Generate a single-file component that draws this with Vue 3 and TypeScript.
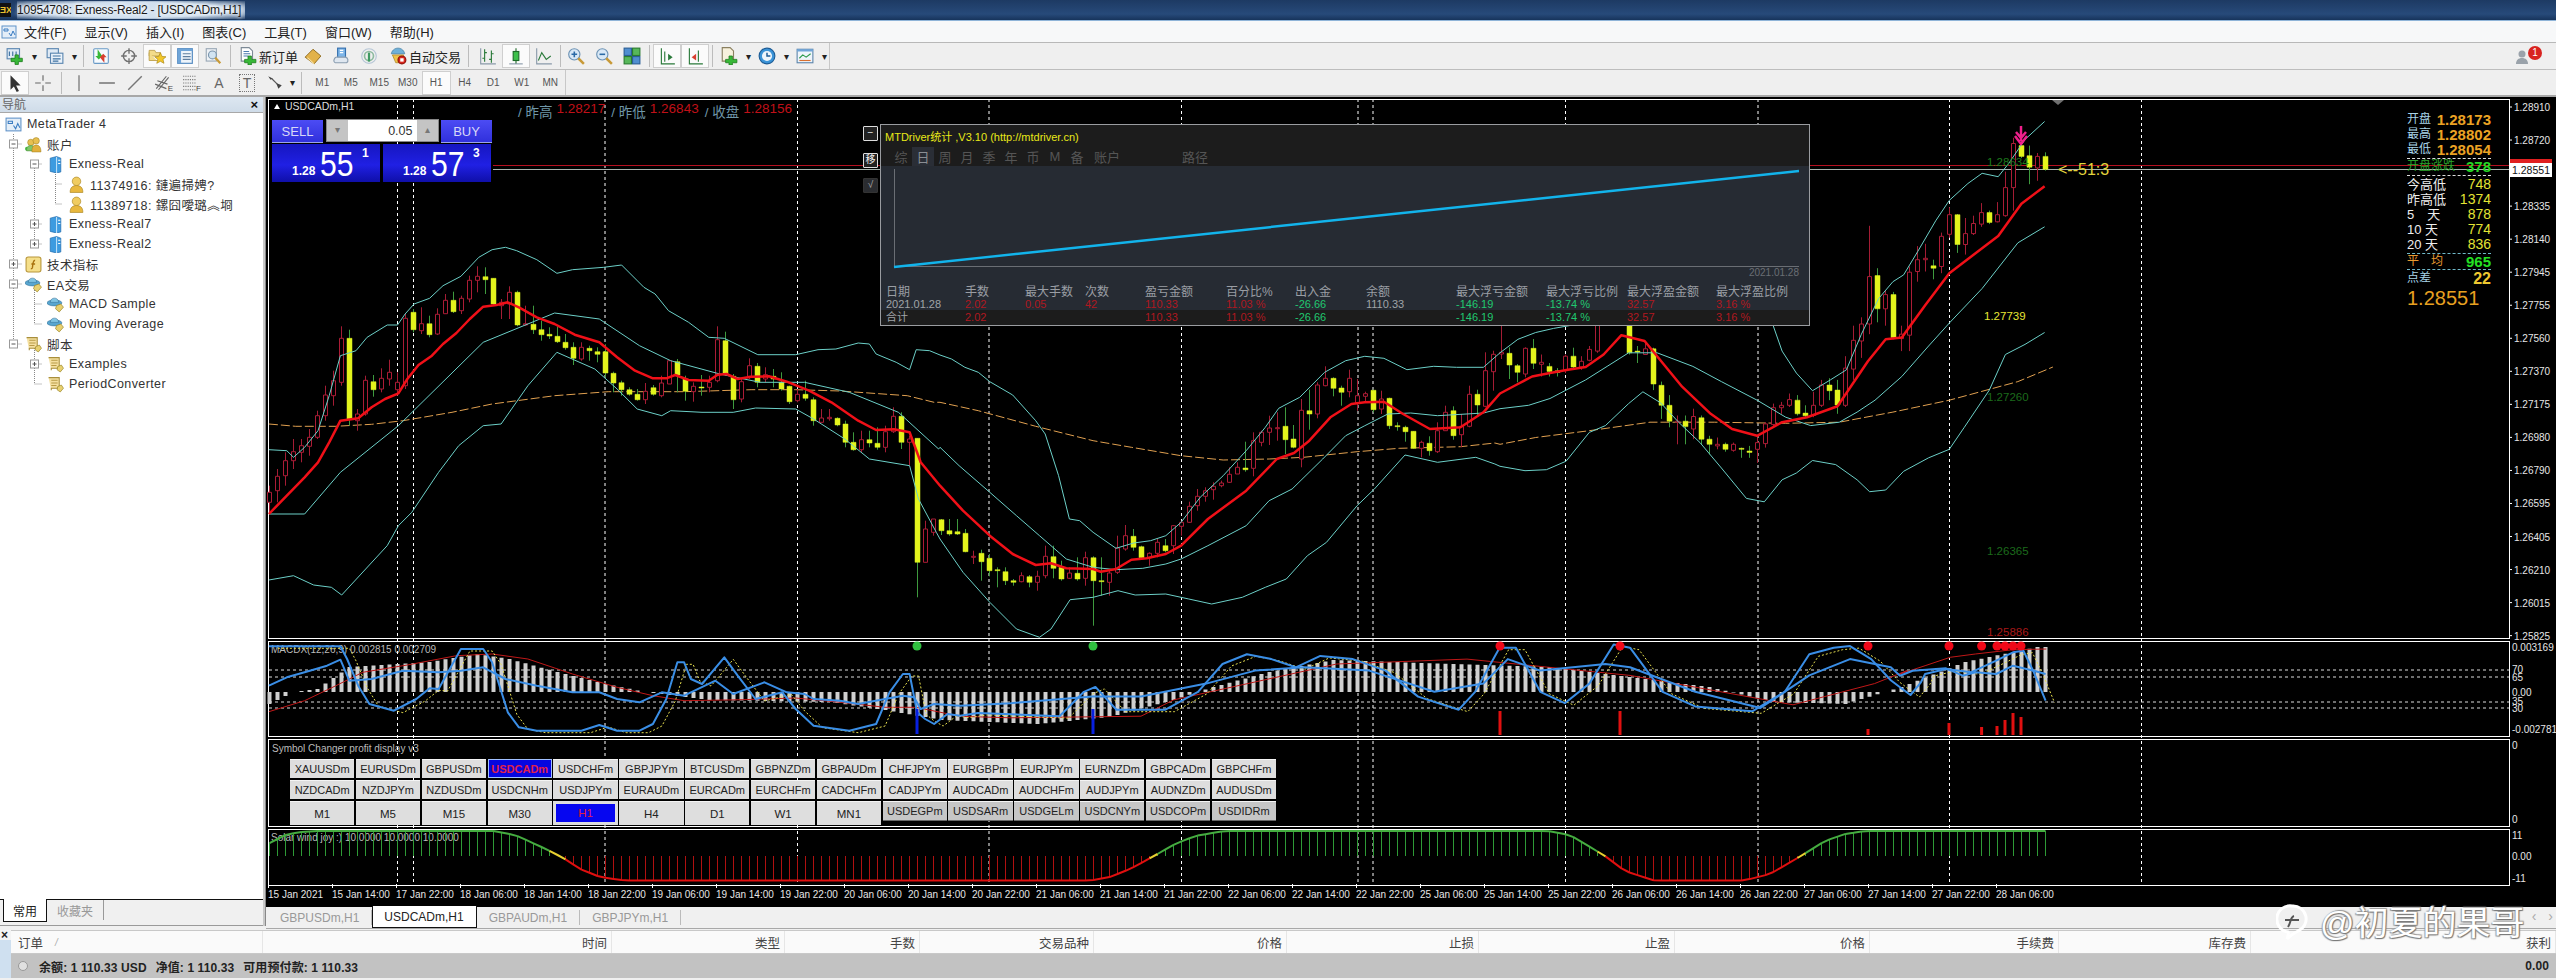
<script setup lang="ts">
type Fn = (x: number, y: number) => [number, number]
const z9: Fn = (x, y) => [260 + x / 2.24, 240 + y / 3]
const z11: Fn = (x, y) => [940 + x / 2.613, 320 + y / 3]
const z10: Fn = (x, y) => [1500 + x / 2.8, 110 + y / 2.953]
const z5: Fn = (x, y) => [260 + x / 2.24, 630 + y / 3]
const z7: Fn = (x, y) => [1900 + x / 2.39, 620 + y / 3]
const zd: Fn = (x, y) => [x * 1.63, y * 1.63]

function conv(fn: Fn, a: number[]): [number, number][] {
  const o: [number, number][] = []
  for (let i = 0; i < a.length; i += 2) o.push(fn(a[i], a[i + 1]))
  return o
}
const toPath = (p: [number, number][]) =>
  'M' + p.map(q => q[0].toFixed(1) + ' ' + q[1].toFixed(1)).join('L')

const bandA = toPath([
  ...conv(z9, [20,632,60,635,75,655,100,625,130,575,155,470,180,350,215,335,240,295,285,258,308,258,325,225,345,195,380,178,410,140,450,112,490,55,520,32,550,25,575,35,620,62,665,103,700,92,770,85,810,78,860,145,885,165,915,215,960,250,1005,295,1040,298,1115,347,1200,347,1250,332,1290,330,1340,312,1365,315,1380,345,1425,370,1455,392,1470,332,1500,335]),
  ...conv(z11, [0,108,30,120,65,145,100,160,130,188,190,228,250,305,275,345,310,470,338,600,365,605,400,640,460,688,506,672,550,665,590,650,630,610,680,535,740,470,800,395,850,325,885,268,940,235,1005,160,1060,125,1110,112,1160,118,1220,152,1290,142,1350,145,1420,145]),
  ...conv(z10, [0,720,50,680,100,660,150,648,300,620,700,600,765,640,790,715,830,780,875,832,925,800,970,770,1012,665,1060,560,1100,510,1130,490,1170,420,1220,330,1258,270,1310,220,1350,190,1395,200,1425,160,1470,90,1525,37]),
])
const bandB = toPath([
  ...conv(z9, [20,825,100,825,180,700,310,560,500,310,660,222,760,240,850,320,920,365,1030,405,1120,430,1220,430,1320,460,1430,520,1520,630]),
  ...conv(z11, [0,385,50,440,130,520,200,590,260,650,330,720,400,745,460,752,530,748,590,735,630,720,700,680,800,620,860,545,920,510,1000,420,1060,350,1110,320,1170,285,1230,282,1300,290,1420,282]),
  ...conv(z10, [0,885,80,875,140,855,185,830,240,800,300,760,360,720,440,720,540,760,620,805,720,860,800,910,870,935,950,925,1000,895,1050,860,1125,790,1200,700,1260,630,1350,530,1450,395,1525,348]),
])
const bandC = toPath([
  ...conv(z9, [20,1023,75,1010,120,1038,160,1045,183,1068,285,920,310,860,340,820,400,700,445,620,500,560,540,555,600,440,665,340,750,390,800,450,845,510,900,530,920,515,990,520,1060,520,1110,507,1200,510,1240,540,1310,600,1365,660,1455,680,1475,780,1515,880]),
  ...conv(z11, [0,660,60,760,130,850,200,930,260,955,290,930,340,842,400,835,465,815,510,828,590,825,650,840,710,855,790,835,850,805,905,780,960,710,1010,670,1090,560,1135,510,1215,408,1300,430,1400,415,1450,435]),
  ...conv(z10, [0,1055,70,1068,130,1065,185,1040,250,955,295,935,360,870,400,835,450,868,500,925,560,985,620,1060,690,1150,740,1160,790,1095,830,1075,875,1038,940,1050,1000,1095,1035,1130,1080,1125,1130,1070,1200,1030,1258,1005,1300,940,1370,830,1415,725,1470,695,1525,660]),
])
const maRed = toPath([
  ...conv(z9, [20,825,60,770,100,715,130,670,155,610,180,545,220,538,250,505,280,480,310,463,330,420,355,378,385,350,410,315,440,282,470,240,500,203,530,198,555,190,580,205,620,235,660,255,705,287,760,310,800,355,840,395,880,418,910,418,930,408,960,423,1005,425,1025,407,1045,405,1070,420,1100,413,1140,412,1180,428,1230,455,1280,490,1340,545,1380,573,1420,571,1455,580,1480,670,1520,735]),
  ...conv(z11, [0,500,60,575,130,650,190,705,250,738,290,733,330,748,400,750,420,758,460,750,500,722,540,718,590,705,630,680,700,600,800,515,880,420,925,402,965,365,1020,295,1075,255,1110,250,1160,248,1210,285,1280,330,1360,325,1420,280]),
  ...conv(z10, [0,840,50,812,90,790,140,780,190,770,240,762,290,725,340,668,405,685,510,820,590,900,650,945,720,965,790,925,860,910,945,878,1030,745,1080,680,1125,675,1190,580,1258,485,1395,375,1460,280,1525,228]),
])
const maOrange = toPath([
  ...conv(z9, [20,555,80,562,170,562,250,556,320,545,430,520,520,495,660,470,780,458,950,458,1100,452,1200,452,1300,456,1450,470,1510,490]),
  ...conv(z11, [0,250,100,275,250,322,400,365,500,385,630,410,740,423,860,420,950,415,1090,398,1200,388,1360,383,1450,372]),
  ...conv(z10, [0,990,100,970,250,950,420,925,600,925,800,928,950,925,1100,895,1258,860,1450,805,1548,762]),
])

/* type (0 hollow red, 1 yellow), body top, body bottom, wick top, wick bottom */
const barsA = [0,760,790,740,820,0,712,755,690,790,0,665,710,640,740,0,638,665,600,690,0,620,640,600,670,0,595,622,570,650,0,530,595,515,600,0,468,530,440,545,0,425,470,395,500,0,298,430,262,440,1,298,540,272,560,0,525,545,510,575,0,424,525,410,530,1,428,452,408,473,0,418,450,388,460,0,400,420,362,440,0,430,452,400,470,0,238,440,225,450,1,220,272,210,280,0,254,275,205,285,1,254,287,230,295,0,226,285,208,288,0,184,224,165,225,1,184,218,158,222,0,178,215,170,225,0,124,180,110,190,0,112,124,82,160,1,113,122,85,165,1,118,195,118,200,0,190,200,180,240,0,160,195,142,240,1,160,258,155,262,0,254,258,200,260,1,256,272,200,285,1,272,287,245,305,1,286,291,265,300,1,292,308,263,312,1,310,326,285,332,1,325,358,310,378,0,325,360,310,365,1,328,335,320,365,1,338,346,325,370,1,338,402,316,415,1,403,432,398,460,1,431,452,425,470,1,452,466,445,470,1,466,482,450,485,0,457,482,432,495,1,446,466,438,470,0,432,470,410,475,0,365,435,365,435,1,368,408,360,460,1,420,457,410,485,0,442,458,430,488,1,444,446,408,470,0,430,445,410,460,0,302,425,262,430,1,305,405,278,410,1,412,482,405,510,0,428,480,420,490,0,380,412,358,420,1,382,430,372,445,0,407,420,385,430,1,412,420,390,445,1,430,450,400,455,1,442,488,440,495,0,466,485,450,490,1,466,478,425,485,1,482,545,475,560,0,537,550,510,550,0,535,539,510,545,1,538,558,535,562,1,555,610,545,625,1,610,632,580,635,0,602,632,575,640,1,602,612,575,625,1,613,625,565,632,0,578,625,560,640,0,532,578,505,582,1,532,610,520,630,0,600,610,590,680,1,598,970,598,1075,0,870,970,845,970,0,840,880,840,890]
const barsB = [1,602,635,600,648,1,635,645,600,650,1,638,645,600,648,1,643,698,630,700,0,712,715,695,735,1,703,728,692,785,1,718,755,705,772,1,752,754,745,805,1,758,785,745,798,1,785,790,780,800,0,770,788,760,790,1,773,790,768,805,0,772,790,755,815,0,712,770,680,778,1,713,748,680,778,1,745,780,725,785,0,762,778,745,780,1,763,780,715,785,0,716,778,698,800,1,716,785,712,920,1,785,788,715,830,0,762,790,750,830,0,687,760,650,765,0,650,690,618,695,1,652,685,630,695,1,683,716,680,720,0,703,716,700,740,0,670,703,660,715,1,680,695,660,700,0,620,680,618,705,0,610,622,605,650,0,562,610,548,612,0,532,560,510,575,0,515,532,505,548,0,502,512,490,542,0,492,500,485,505,0,466,490,445,492,0,445,465,430,465,1,447,452,368,458,0,365,448,340,472,0,340,370,335,382,0,327,340,290,378,0,326,328,280,365,1,322,362,265,405,1,360,385,318,388,0,274,420,240,445,1,275,285,212,332,0,198,285,190,298,0,178,200,142,202,1,178,208,175,232,1,207,220,200,260,0,178,218,152,235,0,230,252,180,275,0,224,232,218,248,1,214,272,212,280,0,240,270,215,285,1,238,320,236,330,1,320,322,310,335,1,325,338,320,368,1,337,388,336,390,0,370,388,365,415,1,373,395,352,410,0,335,398,310,402,0,280,335,260,335,1,275,350,262,362,0,322,347,285,385,0,226,322,200,325,1,226,258,212,290,0,155,262,100,265,0,106,158,95,215,0,100,105,20,120,1,103,138,85,180,1,140,160,135,190,0,88,165,85,175,1,88,133,60,150]
const barsC = [0,748,754,725,790,1,760,775,750,790,1,773,778,765,790,0,730,772,725,780,1,730,762,705,770,0,745,762,730,770,0,710,742,700,745,0,600,715,590,720,1,620,630,610,640,1,620,630,610,640,1,620,630,610,640,1,640,720,600,725,1,715,718,700,750,0,708,725,690,725,1,708,812,705,830,1,816,875,805,915,1,875,922,845,940,0,922,923,905,990,1,922,938,905,990,0,908,945,885,975,1,912,975,905,990,1,975,990,965,1020,0,990,995,970,1005,1,990,1005,985,1012,0,990,1008,985,1012,1,1002,1005,1000,1030,1,1010,1014,995,1030,0,985,1005,970,1045,0,930,988,925,1000,0,882,932,870,940,0,875,882,865,900,0,858,875,840,880,1,860,900,845,905,1,898,906,875,912,0,875,905,835,910,0,815,875,800,880,1,815,832,795,860,1,830,874,800,900,0,765,875,730,880,0,683,768,640,800,0,635,685,615,735,0,495,635,345,665,1,492,590,470,630,0,548,590,535,640,1,548,675,540,680,0,665,678,640,715,0,482,668,465,715,0,445,480,405,510,0,441,445,398,480,1,463,470,445,503,0,376,465,365,485,0,312,370,290,380,1,312,400,310,425,0,368,400,322,430,0,338,368,315,372,0,306,340,278,348,1,306,335,300,340,0,312,333,275,335,0,232,315,185,318,0,102,232,85,300,1,108,140,50,145,1,138,172,108,222,0,140,174,130,212,1,140,178,128,182]

let redW = '', redB = '', yelW = '', yelB = ''
function addBars(list: number[], start: number, fy: (v: number) => number) {
  for (let k = 0; k * 5 < list.length; k++) {
    const i = start + k
    const x = Math.round(269.3 + 8 * i) + 0.5
    const t = list[k * 5]
    const a = fy(list[k * 5 + 1]), b = Math.max(fy(list[k * 5 + 2]), fy(list[k * 5 + 1]) + 1)
    const u = fy(list[k * 5 + 3]), d = fy(list[k * 5 + 4])
    const w = `M${x} ${u.toFixed(1)}V${d.toFixed(1)}`
    if (t === 0) {
      redW += w
      redB += `M${x - 2} ${a.toFixed(1)}h4V${b.toFixed(1)}h-4z`
    } else {
      yelW += w
      yelB += `M${x - 2.5} ${a.toFixed(1)}h5V${b.toFixed(1)}h-5z`
    }
  }
}
addBars(barsA, 0, v => 240 + v / 3)
addBars(barsB, 84, v => 320 + v / 3)
addBars(barsC, 159, v => 110 + v / 2.953)

function lerp(k: number[], x: number): number {
  for (let i = 0; i + 3 < k.length; i += 2) {
    if (x <= k[i + 2]) {
      const t = (x - k[i]) / (k[i + 2] - k[i] || 1)
      return k[i + 1] + (k[i + 3] - k[i + 1]) * Math.max(0, t)
    }
  }
  return k[k.length - 1]
}
const barX = Array.from({ length: 223 }, (_, i) => Math.round(269.3 + 8 * i) + 0.5)

const histK = [0,-12,3,0,6,3,10,25,20,30,26,38,30,33,36,20,42,8,47,0,55,-8,70,-10,77,-18,84,-28,96,-32,105,-25,113,-8,118,5,125,20,133,32,148,28,160,25,170,15,180,5,188,-10,197,-12,204,5,212,30,221,45,222,45]
const histPath = barX.map((x, i) => `M${x} 693V${(693 - lerp(histK, i)).toFixed(1)}`).join('')

const fastPts: [number, number][] = [
  ...conv(z5, [20,52,180,52,195,90,220,170,245,225,300,245,350,210,380,178,400,180,450,60,500,60,520,100,555,250,580,295,620,305,720,305,760,288,800,305,850,305,880,285,910,210,935,100,950,100,965,150,990,165,1040,85,1070,140,1110,210,1170,190,1200,240,1240,290,1320,305,1380,285,1410,190,1440,135,1455,135,1472,250,1490,270,1510,285,1540,255,1568,260]),
  ...conv(zd, [600,438,650,440,665,425,672,422,685,436,715,436,735,425,750,408,765,402,780,405,795,410,810,403,830,405,850,412,870,428,895,436,905,425,920,398,930,398,945,425,960,432,975,420,990,396,1000,398,1020,425,1040,434,1075,437,1095,425,1110,402,1125,398,1135,397,1148,405,1160,418]),
  ...conv(z7, [0,205,25,228,50,190,60,165,110,150,170,160,230,125,270,100,295,95,320,160,348,245]),
]
const fastPath = toPath(fastPts)
const fastLag = toPath(fastPts.map(p => [p[0] + 9, p[1] + 2] as [number, number]))
const slowPath = toPath([
  ...conv(z5, [20,170,60,145,100,130,150,110,180,92,200,155,250,150,320,125,400,130,450,125,500,115,550,150,620,170,700,190,760,190,800,210,850,220,900,190,950,200,1020,155,1060,195,1130,160,1180,190,1220,195,1240,210,1300,215,1340,225,1400,210,1440,200,1465,205,1480,240,1510,225,1568,230]),
  ...conv(zd, [620,432,670,428,700,428,740,420,770,412,800,410,840,412,880,425,910,420,925,405,945,412,985,408,1000,410,1040,425,1080,435,1110,415,1135,405,1160,410]),
  ...conv(z7, [0,170,30,155,110,148,150,170,180,160,230,165,270,140,320,155,348,165]),
])
const redThin = toPath([
  ...conv(z5, [20,248,100,215,170,170,230,130,330,108,440,80,520,75,600,90,700,135,800,175,880,200,950,215,1080,212,1200,207,1300,220,1400,235,1470,235,1568,262]),
  ...conv(zd, [620,441,700,440,720,430,820,408,900,405,1000,415,1100,433,1150,420,1170,412]),
  ...conv(z7, [0,165,60,140,120,115,180,105,270,92,350,90]),
])
const redDots = [1500, 1620, 1868, 1949, 1981.6, 1997, 2005, 2013, 2021]
const redTicks = [[1500, 712], [1620, 712], [1868, 730], [1949, 724], [1981.6, 728], [1997, 727], [2005, 721], [2013, 714], [2021, 718]]
const redTickPath = redTicks.map(t => `M${t[0]} ${t[1]}V736`).join('')

const solarK = [268,845,285,836,300,833,320,832,494,832,515,836,535,845,550,852,565,860,580,870,600,878,625,881.5,1090,881.5,1110,878,1130,870,1154,857,1175,845,1195,837,1224,832,1548,832,1570,836,1590,848,1605,857,1625,872,1654,881.5,1744,881.5,1770,875,1801,857,1825,842,1845,835,1866,832,2046,832]
let solarG = '', solarR = '', solarGL = '', solarRL = '', solarY = ''
barX.forEach((x, i) => {
  const y = lerp(solarK, x)
  if (y <= 857) solarG += `M${x} 857V${y.toFixed(1)}`
  else solarR += `M${x} 857V${y.toFixed(1)}`
  if (i > 0) {
    const px = barX[i - 1], py = lerp(solarK, px)
    const seg = `M${px} ${py.toFixed(1)}L${x} ${y.toFixed(1)}`
    if (Math.abs(y - 857) < 6 && Math.abs(py - 857) < 6) solarY += seg
    else if (y <= 857) solarGL += seg
    else solarRL += seg
  }
})

const dashX = [397.5, 413.5, 605, 797.5, 989, 1181.5, 1358, 1373, 1565.5, 1758, 1949.5, 2141.5]
const dashPath = dashX.map(x => `M${x} 100V885`).join('')
const levelPath = [671, 678, 703, 709].map(y => `M269 ${y}H2509`).join('')

const prices = ['1.28910','1.28720','1.28525','1.28335','1.28140','1.27945','1.27755','1.27560','1.27370','1.27175','1.26980','1.26790','1.26595','1.26405','1.26210','1.26015','1.25825']
const priceTicks = prices.map((p, i) => ({ p, y: 108 + 33.04 * i }))
const subAxis = [
  { t: '0.003169', y: 648 }, { t: '70', y: 670 }, { t: '65', y: 678 }, { t: '0.00', y: 693 }, { t: '35', y: 702 }, { t: '30', y: 709 },
  { t: '-0.002781', y: 730 }, { t: '0', y: 746 }, { t: '0', y: 820 }, { t: '11', y: 836 }, { t: '0.00', y: 857 }, { t: '-11', y: 879 },
]
const times = ['15 Jan 2021','15 Jan 14:00','17 Jan 22:00','18 Jan 06:00','18 Jan 14:00','18 Jan 22:00','19 Jan 06:00','19 Jan 14:00','19 Jan 22:00','20 Jan 06:00','20 Jan 14:00','20 Jan 22:00','21 Jan 06:00','21 Jan 14:00','21 Jan 22:00','22 Jan 06:00','22 Jan 14:00','22 Jan 22:00','25 Jan 06:00','25 Jan 14:00','25 Jan 22:00','26 Jan 06:00','26 Jan 14:00','26 Jan 22:00','27 Jan 06:00','27 Jan 14:00','27 Jan 22:00','28 Jan 06:00']
const timeTicks = times.map((t, i) => ({ t, x: 268 + 64 * i }))
const timeTickPath = timeTicks.map(t => `M${t.x + 0.5} 885V889`).join('')
const floats = [
  { t: '1.28634', x: 1987, y: 167, c: '#1c7a1c' }, { t: '1.27739', x: 1984, y: 321, c: '#e6e634' },
  { t: '1.27260', x: 1987, y: 402, c: '#1c6a1c' }, { t: '1.26365', x: 1987, y: 556, c: '#1c6a1c' }, { t: '1.25886', x: 1987, y: 637, c: '#a81818' },
]

const menus = ['文件(F)', '显示(V)', '插入(I)', '图表(C)', '工具(T)', '窗口(W)', '帮助(H)']

type Tool = { k: 'b' | 'a' | 's' | 't'; i?: string; x?: string; p?: boolean; w?: number }
const tb1: Tool[] = [
  { k: 'b', i: 'plus' }, { k: 'a' }, { k: 's', w: 2 }, { k: 'b', i: 'profile' }, { k: 'a' }, { k: 's', w: 8 },
  { k: 'b', i: 'market' }, { k: 'b', i: 'cross' }, { k: 'b', i: 'star', p: true }, { k: 'b', i: 'list', p: true }, { k: 'b', i: 'glass' }, { k: 's', w: 6 },
  { k: 't', i: 'order', x: '新订单', w: 66 }, { k: 'b', i: 'gold' }, { k: 'b', i: 'cloud' }, { k: 'b', i: 'signal' },
  { k: 't', i: 'auto', x: '自动交易', w: 80 }, { k: 's', w: 11 }, { k: 'b', i: 'bar' }, { k: 'b', i: 'candle', p: true }, { k: 'b', i: 'line' }, { k: 's', w: 4 },
  { k: 'b', i: 'zin' }, { k: 'b', i: 'zout' }, { k: 'b', i: 'tile' }, { k: 's', w: 7 }, { k: 'b', i: 'shift', p: true }, { k: 'b', i: 'scroll', p: true }, { k: 's', w: 6 },
  { k: 'b', i: 'ind' }, { k: 'a' }, { k: 'b', i: 'clock' }, { k: 'a' }, { k: 'b', i: 'tmpl' }, { k: 'a' },
]
const tb2: Tool[] = [
  { k: 'b', i: 'cursor', p: true }, { k: 'b', i: 'hair' }, { k: 's', w: 8 }, { k: 'b', i: 'vl' }, { k: 'b', i: 'hl' }, { k: 'b', i: 'tl' },
  { k: 'b', i: 'fibe' }, { k: 'b', i: 'fibf' }, { k: 'b', i: 'lettera' }, { k: 'b', i: 'lettert' }, { k: 'b', i: 'arrows' }, { k: 'a' }, { k: 's', w: 13 },
]
const periods = ['M1', 'M5', 'M15', 'M30', 'H1', 'H4', 'D1', 'W1', 'MN']

const tree = [
  { t: 'MetaTrader 4', i: 'mt', l: 0 }, { t: '账户', i: 'accounts', l: 1 }, { t: 'Exness-Real', i: 'srv', l: 2 },
  { t: '11374916: 鏈遍掃娉?', i: 'user', l: 3 }, { t: '11389718: 鏍囧噯璐︽埛', i: 'user', l: 3 },
  { t: 'Exness-Real7', i: 'srv', l: 2 }, { t: 'Exness-Real2', i: 'srv', l: 2 }, { t: '技术指标', i: 'f', l: 1 },
  { t: 'EA交易', i: 'hat', l: 1 }, { t: 'MACD Sample', i: 'hat', l: 2 }, { t: 'Moving Average', i: 'hat', l: 2 },
  { t: '脚本', i: 'roll', l: 1 }, { t: 'Examples', i: 'roll', l: 2 }, { t: 'PeriodConverter', i: 'roll', l: 2 },
]
const guides = 'M13.5 20V230M13.5 30H22M13.5 150H22M13.5 170H22M13.5 230H22M34.5 50V130M34.5 50H42M34.5 110H42M34.5 130H42M55.5 50V90M55.5 70H62M55.5 90H62M34.5 170V210M34.5 190H42M34.5 210H42M34.5 230V270M34.5 250H42M34.5 270H42'
const boxes = [
  { x: 13.5, y: 30, o: false }, { x: 34.5, y: 50, o: false }, { x: 34.5, y: 110, o: true }, { x: 34.5, y: 130, o: true },
  { x: 13.5, y: 150, o: true }, { x: 13.5, y: 170, o: false }, { x: 13.5, y: 230, o: false }, { x: 34.5, y: 250, o: true },
]

const rowA = ['XAUUSDm','EURUSDm','GBPUSDm','USDCADm','USDCHFm','GBPJPYm','BTCUSDm','GBPNZDm','GBPAUDm','CHFJPYm','EURGBPm','EURJPYm','EURNZDm','GBPCADm','GBPCHFm']
const rowB = ['NZDCADm','NZDJPYm','NZDUSDm','USDCNHm','USDJPYm','EURAUDm','EURCADm','EURCHFm','CADCHFm','CADJPYm','AUDCADm','AUDCHFm','AUDJPYm','AUDNZDm','AUDUSDm']
const rowC = ['M1','M5','M15','M30','H1','H4','D1','W1','MN1']
const rowD = ['USDEGPm','USDSARm','USDGELm','USDCNYm','USDCOPm','USDIDRm']

const statRows = [
  { l: '开盘', v: '1.28173', c: 'top' }, { l: '最高', v: '1.28802', c: 'top' }, { l: '最低', v: '1.28054', c: 'top' },
  { l: '开盘涨跌', v: '378', c: 'open' }, { l: '今高低', v: '748', c: 'day' }, { l: '昨高低', v: '1374', c: 'day' },
  { l: '5　天', v: '878', c: 'day' }, { l: '10 天', v: '774', c: 'day' }, { l: '20 天', v: '836', c: 'day' },
  { l: '平　均', v: '965', c: 'avg' }, { l: '点差', v: '22', c: 'spread' },
]

const statHead = ['日期','手数','最大手数','次数','盈亏金额','百分比%','出入金','余额','最大浮亏金额','最大浮亏比例','最大浮盈金额','最大浮盈比例']
const statA = [['2021.01.28','g'],['2.02','r'],['0.05','r'],['42','r'],['110.33','r'],['11.03 %','r'],['-26.66','n'],['1110.33','g'],['-146.19','n'],['-13.74 %','n'],['32.57','r'],['3.16 %','r']]
const statB = [['合计','g'],['2.02','r'],['','r'],['','r'],['110.33','r'],['11.03 %','r'],['-26.66','n'],['','g'],['-146.19','n'],['-13.74 %','n'],['32.57','r'],['3.16 %','r']]
const tabs = ['综', '日', '周', '月', '季', '年', '币', 'M', '备', '账户']

const chartTabs = ['GBPUSDm,H1', 'USDCADm,H1', 'GBPAUDm,H1', 'GBPJPYm,H1']
const termCols = ['时间', '类型', '手数', '交易品种', '价格', '止损', '止盈', '价格', '手续费', '库存费', '获利']
</script>

<template>
  <div class="app">
    <svg class="defs" aria-hidden="true">
      <symbol id="i-mt" viewBox="0 0 16 16"><rect x="1" y="2" width="14" height="12" fill="#e4eef8" stroke="#5f92c8"/><path d="M3 5h4v2H3zM8 9l2 3 2-5 2 4" fill="none" stroke="#3a7cc2"/></symbol>
      <symbol id="i-plus" viewBox="0 0 16 16"><rect x="1" y="1.5" width="11" height="9" fill="#dfeaf5" stroke="#5b86b0"/><path d="M3 4v4M6 4v4M9 4v4" stroke="#3c70a0"/><path d="M8 7h3v3h3.5v3H11v2.5H8V13H4.5v-3H8z" fill="#38b838" stroke="#1c7c1c" stroke-width=".7"/></symbol>
      <symbol id="i-profile" viewBox="0 0 16 16"><rect x="1" y="1.5" width="10" height="8" fill="#dfeaf5" stroke="#5b86b0"/><rect x="4" y="5.5" width="11" height="9" fill="#eaf2fa" stroke="#5b86b0"/><path d="M6 8h7M6 10.5h7M6 12.500h5" stroke="#3c70a0"/></symbol>
      <symbol id="i-market" viewBox="0 0 16 16"><rect x="1.500" y="1.500" width="13" height="13" rx="1" fill="#f6fafe" stroke="#6a9ac6"/><path d="M5 3v6H3l3 3 3-3" fill="#38b838" transform="translate(0 -1)"/><path d="M11 13V8h2l-3-3-3 3" fill="#d84030" transform="translate(0 1) scale(1)"/></symbol>
      <symbol id="i-cross" viewBox="0 0 16 16"><circle cx="8" cy="8" r="5" fill="none" stroke="#707070" stroke-width="1.300"/><path d="M8 1v5M8 10v5M1 8h5M10 8h5" stroke="#707070" stroke-width="1.200"/></symbol>
      <symbol id="i-star" viewBox="0 0 16 16"><path d="M1 3h5l1 2h4v3H1z" fill="#f3dc8a" stroke="#b6963c" stroke-width=".7"/><path d="M1 5v7h7" fill="#f3dc8a" stroke="#b6963c" stroke-width=".7"/><path d="M11 5l1.500 3.400 3.500.3-2.700 2.300.9 3.500L11 12.700 7.800 14.500l.9-3.500L6 8.700l3.500-.3z" fill="#f2c72a" stroke="#a88412" stroke-width=".6"/></symbol>
      <symbol id="i-list" viewBox="0 0 16 16"><rect x="1.500" y="1.500" width="13" height="13" fill="#eef5fb" stroke="#4f86be"/><path d="M1.500 1.500h13v2h-13zM1.500 3.500h3v11h-3z" fill="#6fa5d8"/><path d="M6 6h7M6 8.500h7M6 11h7" stroke="#5f7f9f"/></symbol>
      <symbol id="i-glass" viewBox="0 0 16 16"><rect x="2" y="1.500" width="9" height="11" fill="#eef2f6" stroke="#9aa8b6"/><circle cx="7.500" cy="7" r="3.500" fill="#d2e4f2" stroke="#7a94ac"/><path d="M10 9.500l4.500 5" stroke="#c89a38" stroke-width="2"/></symbol>
      <symbol id="i-order" viewBox="0 0 16 16"><path d="M2 .5h7l3 3v9H2z" fill="#fff" stroke="#7d8a96"/><path d="M4 4h5M4 6h6M4 8h4" stroke="#4d7cb0"/><path d="M8 8h3v3h4v3h-4v2H8v-2H5v-3h3z" fill="#38b838" stroke="#1c7c1c" stroke-width=".7"/></symbol>
      <symbol id="i-gold" viewBox="0 0 16 16"><path d="M1 9l7-7 7 6-6 7z" fill="#e2b24a" stroke="#8a6518" stroke-width=".8"/><path d="M3 9.500l6 5.500" stroke="#f8e0a0"/></symbol>
      <symbol id="i-cloud" viewBox="0 0 16 16"><rect x="5" y="1" width="7" height="9" fill="#7db5e8" stroke="#336fae"/><path d="M7 3h3M7 5h3" stroke="#fff"/><path d="M2 11a2.500 2.500 0 0 1 3-2h7a2.800 2.800 0 0 1 1 5H3a2 2 0 0 1-1-3z" fill="#dfe7f0" stroke="#8a9db0"/></symbol>
      <symbol id="i-signal" viewBox="0 0 16 16"><circle cx="8" cy="8" r="6.500" fill="none" stroke="#b6c6d6"/><circle cx="8" cy="8" r="4" fill="none" stroke="#8ebba0" stroke-width="1.500"/><rect x="7" y="5" width="2" height="8" fill="#3f9a62"/></symbol>
      <symbol id="i-auto" viewBox="0 0 16 16"><path d="M2 6c1-4 4-5 6-5s5 1 6 5z" fill="#6fb0d8" stroke="#3a78a0" stroke-width=".6"/><path d="M3 7h10l-2 7H6z" fill="#f0c24a" stroke="#a07c18" stroke-width=".6"/><circle cx="11.500" cy="11.500" r="3.500" fill="#d8261e" stroke="#8c1008"/><rect x="10" y="10" width="3" height="3" fill="#fff"/></symbol>
      <symbol id="i-bar" viewBox="0 0 16 16"><path d="M5 2v11M3 10h2M5 5h2M11 3v11M9 11h2M11 6h2" stroke="#2a7a3a" fill="none"/><path d="M1.500 1v14H15" stroke="#8a9aaa" fill="none"/></symbol>
      <symbol id="i-candle" viewBox="0 0 16 16"><path d="M8 1v14" stroke="#226c2c"/><rect x="5.500" y="4" width="5" height="8" fill="#3cc04a" stroke="#1c6c28"/><path d="M2 15h12" stroke="#8a9aaa"/></symbol>
      <symbol id="i-line" viewBox="0 0 16 16"><path d="M1.500 1v14H15" stroke="#8a9aaa" fill="none"/><path d="M3 12l3-7 4 6 4-3" stroke="#2a7a3a" fill="none"/></symbol>
      <symbol id="i-zin" viewBox="0 0 16 16"><circle cx="6.500" cy="6.500" r="5" fill="#d8e8f6" stroke="#6c92b4"/><path d="M4 6.500h5M6.500 4v5" stroke="#2a6aa6" stroke-width="1.400"/><path d="M10 10l5 5" stroke="#c89a38" stroke-width="2.200"/></symbol>
      <symbol id="i-zout" viewBox="0 0 16 16"><circle cx="6.500" cy="6.500" r="5" fill="#d8e8f6" stroke="#6c92b4"/><path d="M4 6.500h5" stroke="#2a6aa6" stroke-width="1.400"/><path d="M10 10l5 5" stroke="#c89a38" stroke-width="2.200"/></symbol>
      <symbol id="i-tile" viewBox="0 0 16 16"><rect x="1" y="1" width="6.500" height="6.500" fill="#4f8ed0" stroke="#2a5f96"/><rect x="8.500" y="1" width="6.500" height="6.500" fill="#57b85a" stroke="#2a7c30"/><rect x="1" y="8.500" width="6.500" height="6.500" fill="#57b85a" stroke="#2a7c30"/><rect x="8.500" y="8.500" width="6.500" height="6.500" fill="#4f8ed0" stroke="#2a5f96"/></symbol>
      <symbol id="i-shift" viewBox="0 0 16 16"><path d="M3 1v14H15M6 4v9" stroke="#2a7a3a" fill="none"/><path d="M9 6l4 3-4 3z" fill="#2a7a3a"/></symbol>
      <symbol id="i-scroll" viewBox="0 0 16 16"><path d="M3 1v14H15M11 3v10" stroke="#2a7a3a" fill="none"/><path d="M9 6L5 9l4 3z" fill="#d84030"/></symbol>
      <symbol id="i-ind" viewBox="0 0 16 16"><path d="M2 .5h7l3 3v9H2z" fill="#f7f1dc" stroke="#8a8060"/><path d="M8 8h3v3h4v3h-4v2H8v-2H5v-3h3z" fill="#38b838" stroke="#1c7c1c" stroke-width=".7"/></symbol>
      <symbol id="i-clock" viewBox="0 0 16 16"><circle cx="8" cy="8" r="7" fill="#3b94d8" stroke="#1c5c96"/><circle cx="8" cy="8" r="4.500" fill="#eef6fc"/><path d="M8 5v3h3" stroke="#1c5c96" fill="none" stroke-width="1.300"/></symbol>
      <symbol id="i-tmpl" viewBox="0 0 16 16"><rect x="1" y="2" width="14" height="12" fill="#eef5fb" stroke="#5f87ad"/><path d="M1 2h14v2H1z" fill="#6fa5d8"/><path d="M3 10l3-3 3 2 4-3" stroke="#2a9a4a" fill="none"/><path d="M3 12h10" stroke="#d87030"/></symbol>
      <symbol id="i-cursor" viewBox="0 0 16 16"><path d="M4 1v13l3-3 2.500 5 2-1-2.500-4.800h4z" fill="#333"/></symbol>
      <symbol id="i-hair" viewBox="0 0 16 16"><path d="M8 1v5M8 10v5M1 8h5M10 8h5" stroke="#666"/></symbol>
      <symbol id="i-vl" viewBox="0 0 16 16"><path d="M8 1v14" stroke="#666"/></symbol>
      <symbol id="i-hl" viewBox="0 0 16 16"><path d="M1 8h14" stroke="#666" stroke-width="1.200"/></symbol>
      <symbol id="i-tl" viewBox="0 0 16 16"><path d="M2 14L14 2" stroke="#777" stroke-width="1.200"/></symbol>
      <symbol id="i-fibe" viewBox="0 0 16 16"><path d="M2 13L11 2M4 14L13 3M3 6l9 3M1 9l10 4" stroke="#666" fill="none"/></symbol>
      <symbol id="i-fibf" viewBox="0 0 16 16"><path d="M1 2h11M1 5h11M1 8h11M1 11h11M1 14h11" stroke="#777" stroke-dasharray="1 1"/></symbol>
      <symbol id="i-arrows" viewBox="0 0 16 16"><path d="M2 2l4 2-2 1zM9 8l5 2-3 3z" fill="#444"/><path d="M5 4l5 5" stroke="#555"/></symbol>
      <symbol id="i-accounts" viewBox="0 0 16 16"><circle cx="1.800" cy="12" r="1.800" fill="#46c046"/><circle cx="5.500" cy="6" r="3" fill="#e8c050" stroke="#a08020" stroke-width=".5"/><path d="M1.500 14c0-4 1.500-5 4-5s4 1 4 5z" fill="#7fc76a" stroke="#4a8a3a" stroke-width=".5"/><circle cx="10.500" cy="4.500" r="3" fill="#e8c050" stroke="#a08020" stroke-width=".5"/><path d="M6.500 15c0-5 1.500-6.500 4-6.500s4.500 1.500 4.500 6.500z" fill="#e2b03c" stroke="#a08020" stroke-width=".5"/></symbol>
      <symbol id="i-srv" viewBox="0 0 16 16"><path d="M3 2l6-1.500 4 1.500v13l-4 1-6-1.500z" fill="#3d9be0" stroke="#1c67a8" stroke-width=".6"/><path d="M9 1v15" stroke="#bfe0f8"/><path d="M10.500 4h2M10.500 7h2" stroke="#fff"/></symbol>
      <symbol id="i-user" viewBox="0 0 16 16"><circle cx="8" cy="5" r="4" fill="#f0cc60" stroke="#a88420" stroke-width=".6"/><path d="M2 15.500c0-5 2.500-6.500 6-6.500s6 1.500 6 6.500z" fill="#e8b83e" stroke="#a88420" stroke-width=".6"/></symbol>
      <symbol id="i-f" viewBox="0 0 16 16"><rect x="1" y="1" width="14" height="14" rx="2" fill="#f5df8a" stroke="#b8963a"/><path d="M9.500 4C8 4 8 5 7.500 7L7 11c-.2 1-1 1-1.500 1M6 7.500h3.500" stroke="#a8720e" fill="none" stroke-width="1.300"/></symbol>
      <symbol id="i-hat" viewBox="0 0 16 16"><ellipse cx="7" cy="6.500" rx="7" ry="2.800" fill="#58a6d0" stroke="#2e6c94" stroke-width=".5"/><path d="M3 6c.5-3 2-4 4-4s3.500 1 4 4z" fill="#7fc4e4" stroke="#2e6c94" stroke-width=".5"/><path d="M9 9l4-1.500 2.500 3-4 4.500-3.500-3z" fill="#e8d070" stroke="#94801e" stroke-width=".6"/></symbol>
      <symbol id="i-roll" viewBox="0 0 16 16"><path d="M1.500 1.500h10v10h-7.500v2" fill="#f5e0a0" stroke="#a88e3c"/><path d="M4 4h6M4 6.500h6M4 9h5" stroke="#b89a46"/><path d="M10 10l3.500-1.500 2 3-3 3.500-3-2z" fill="#e8d070" stroke="#94801e" stroke-width=".6"/></symbol>
      <symbol id="i-badge" viewBox="0 0 16 16"><circle cx="8" cy="5" r="3.500" fill="#9aa2aa"/><path d="M2 15c0-4 2.500-6 6-6s6 2 6 6z" fill="#9aa2aa"/></symbol>
    </svg>

    <header class="titlebar">
      <span class="logo">ƎX</span>
      <span class="title">10954708: Exness-Real2 - [USDCADm,H1]</span>
    </header>

    <nav class="menubar">
      <svg class="mico"><use href="#i-mt" /></svg>
      <span v-for="m in menus" :key="m" class="menu">{{ m }}</span>
    </nav>

    <div class="toolrow tr1">
      <div class="toolbar">
        <template v-for="(t, n) in tb1" :key="n">
          <span v-if="t.k === 's'" class="sep" :style="{ width: t.w + 'px' }"><i v-if="(t.w ?? 0) > 2"></i></span>
          <span v-else-if="t.k === 'a'" class="drop">▾</span>
          <span v-else-if="t.k === 't'" class="tbtn wide" :style="{ width: t.w + 'px' }"><svg class="tico"><use :href="'#i-' + t.i" /></svg>{{ t.x }}</span>
          <span v-else class="tbtn" :class="{ pressed: t.p }"><svg class="tico"><use :href="'#i-' + t.i" /></svg></span>
        </template>
      </div>
      <div class="corner">
        <svg class="bico"><use href="#i-badge" /></svg>
        <span class="badge">1</span>
      </div>
    </div>

    <div class="toolrow tr2">
      <div class="toolbar">
        <template v-for="(t, n) in tb2" :key="n">
          <span v-if="t.k === 's'" class="sep" :style="{ width: t.w + 'px' }"><i></i></span>
          <span v-else-if="t.k === 'a'" class="drop narrow">▾</span>
          <span v-else-if="t.i === 'lettera'" class="tbtn letter">A</span>
          <span v-else-if="t.i === 'lettert'" class="tbtn letter boxed"><b>T</b></span>
          <span v-else class="tbtn" :class="{ pressed: t.p }">
            <svg class="tico"><use :href="'#i-' + t.i" /></svg>
            <small v-if="t.i === 'fibe'">E</small><small v-if="t.i === 'fibf'">F</small>
          </span>
        </template>
        <span v-for="p in periods" :key="p" class="period" :class="{ pressed: p === 'H1' }">{{ p }}</span>
      </div>
    </div>

    <main class="main">
      <aside class="nav">
        <div class="navhead"><span>导航</span><b>×</b></div>
        <div class="tree">
          <svg class="guides" width="120" height="300">
            <path :d="guides" fill="none" stroke="#888" stroke-dasharray="1 1" />
            <g v-for="(b, n) in boxes" :key="n">
              <rect :x="b.x - 4" :y="b.y - 4" width="8" height="8" fill="#fff" stroke="#999" />
              <path :d="`M${b.x - 2} ${b.y}h4` + (b.o ? `M${b.x} ${b.y - 2}v4` : '')" stroke="#555" />
            </g>
          </svg>
          <div v-for="r in tree" :key="r.t" class="node" :class="'l' + r.l">
            <svg class="nico"><use :href="'#i-' + r.i" /></svg>
            <span>{{ r.t }}</span>
          </div>
        </div>
        <div class="navtabs">
          <span class="ntab on">常用</span>
          <span class="ntab">收藏夹</span>
        </div>
      </aside>
      <div class="split"></div>
      <section class="chartcol">
        <div class="chart">
          <div class="panes">
            <div class="pane p-main"></div>
            <div class="pane p-ind"><span class="plabel">MACDX(12,26,9) 0.002815 0.002709</span></div>
            <div class="pane p-sym">
              <div class="plabel sym">Symbol Changer profit display v3</div>
              <div class="symgrid">
                <span v-for="s in rowA" :key="s" class="sbtn" :class="{ act: s === 'USDCADm' }">{{ s }}</span>
                <span v-for="s in rowB" :key="s" class="sbtn">{{ s }}</span>
                <span v-for="s in rowC" :key="s" class="sbtn big" :class="{ actb: s === 'H1' }">{{ s }}</span>
                <span v-for="s in rowD" :key="s" class="sbtn small">{{ s }}</span>
              </div>
            </div>
            <div class="pane p-sol"><span class="plabel">Solar wind joy :) 10.0000 10.0000 10.0000</span></div>
          </div>

          <svg class="plot" viewBox="266 98 2290 808" width="2290" height="808">
            <path :d="dashPath" stroke="#fff" stroke-dasharray="3 3" fill="none" />
            <path :d="levelPath" stroke="#dcdcdc" stroke-dasharray="3 3" fill="none" />
            <path d="M893 166.500H2509" stroke="#b41020" fill="none" />
            <path d="M1807 170.500H2509M493 170.500H880" stroke="#a8b4ae" fill="none" />
            <path d="M493 166.500H880" stroke="#b41020" fill="none" />

            <path :d="maOrange" fill="none" stroke="#e0a050" stroke-dasharray="9 3" />
            <path :d="redW" stroke="#a41c34" fill="none" />
            <path :d="yelW" stroke="#3e9a3e" fill="none" />
            <path :d="redB" stroke="#ac1c36" fill="#000" />
            <path :d="yelB" stroke="#d8f020" stroke-width=".5" fill="#e4f41c" />
            <g fill="none" stroke="#6cd0c8">
              <path :d="bandA" /><path :d="bandB" /><path :d="bandC" />
            </g>
            <path :d="maRed" fill="none" stroke="#f01018" stroke-width="2.500" stroke-linejoin="round" />
            <path d="M2021 127V142M2015 137l6 8 6-8M2016 133l5 6 5-6" fill="none" stroke="#f0208c" stroke-width="2.500" />
            <path d="M2052 101h12l-6 5z" fill="#707070" />

            <text v-for="f in floats" :key="f.t" :x="f.x" :y="f.y" :fill="f.c" class="ft">{{ f.t }}</text>
            <text x="2058" y="176" class="rr">&lt;--51:3</text>

            <!-- indicator -->
            <path :d="histPath" stroke="#cfcfcf" stroke-width="4" fill="none" />
            <path :d="redThin" stroke="#c01818" fill="none" />
            <path :d="fastLag" stroke="#e8e050" stroke-dasharray="2 2" fill="none" />
            <path :d="slowPath" stroke="#3a8ee6" stroke-width="2" fill="none" stroke-linejoin="round" />
            <path :d="fastPath" stroke="#3a8ee6" stroke-width="2" fill="none" stroke-linejoin="round" />
            <path d="M917 710V735M1093 710V735" stroke="#0820e0" stroke-width="3" fill="none" />
            <path :d="redTickPath" stroke="#e01010" stroke-width="3" fill="none" />
            <circle cx="917" cy="647" r="4.500" fill="#30c040" />
            <circle cx="1093" cy="647" r="4.500" fill="#30c040" />
            <circle v-for="d in redDots" :key="d" :cx="d" cy="647" r="4.500" fill="#f00818" />

            <!-- solar -->
            <path :d="solarG" stroke="#2e9a36" fill="none" />
            <path :d="solarR" stroke="#b01010" fill="none" />
            <path :d="solarGL" stroke="#45ac40" stroke-width="2" fill="none" />
            <path :d="solarRL" stroke="#e00f0f" stroke-width="2" fill="none" />
            <path :d="solarY" stroke="#e8d030" stroke-width="2" fill="none" />

            <!-- axes -->
            <path :d="timeTickPath" stroke="#fff" />
            <path v-for="t in priceTicks" :key="t.p" :d="`M2509 ${t.y}h3`" stroke="#fff" />
            <text v-for="t in priceTicks" :key="t.p + 'l'" x="2514" :y="t.y + 4" class="ax">{{ t.p }}</text>
            <text v-for="(t, n) in subAxis" :key="n" x="2512" :y="t.y + 4" class="ax">{{ t.t }}</text>
            <text v-for="t in timeTicks" :key="t.t" :x="t.x" y="899" class="ax">{{ t.t }}</text>
          </svg>

          <div class="symname"><i></i>USDCADm,H1</div>
          <div class="hilo">
            <span>/ 昨高</span><em>1.28217</em><span>/ 昨低</span><em>1.26843</em><span>/ 收盘</span><em>1.28156</em>
          </div>

          <div class="trade">
            <div class="tradetop">
              <span class="tside">SELL</span>
              <span class="lots"><i class="spin">▾</i><b>0.05</b><i class="spin">▴</i></span>
              <span class="tside">BUY</span>
            </div>
            <div class="tradebot">
              <div class="quote"><small>1.28</small><strong>55</strong><sup>1</sup></div>
              <div class="quote"><small>1.28</small><strong>57</strong><sup>3</sup></div>
            </div>
          </div>

          <div class="sidebtns">
            <span class="sb">−</span>
            <span class="sb">移</span>
            <span class="sb dark">√</span>
          </div>

          <div class="mtd">
            <div class="mtdtitle">MTDriver统计 ,V3.10 (http://mtdriver.cn)</div>
            <div class="mtdtabs">
              <span v-for="t in tabs" :key="t" class="mt" :class="{ on: t === '日', acct: t === '账户' }">{{ t }}</span>
              <span class="mt path">路径</span>
            </div>
            <div class="mtdbody">
              <svg class="eq" width="928" height="104" viewBox="880 167 928 104">
                <path d="M893.500 170V267.500H1798" stroke="#6a6e74" fill="none" />
                <path d="M893 268L1798 172" stroke="#12b4ec" stroke-width="2.500" fill="none" />
              </svg>
              <div class="eqdate">2021.01.28</div>
              <div class="stat head"><span v-for="h in statHead" :key="h">{{ h }}</span></div>
              <div class="stat vals"><span v-for="(v, n) in statA" :key="n" :class="v[1]">{{ v[0] }}</span></div>
            </div>
            <div class="stat vals tot"><span v-for="(v, n) in statB" :key="n" :class="v[1]">{{ v[0] }}</span></div>
          </div>

          <div class="stats">
            <div v-for="s in statRows" :key="s.l" class="srow" :class="s.c"><span>{{ s.l }}</span><b>{{ s.v }}</b></div>
            <div class="bigp">1.28551</div>
          </div>

          <div class="tagred"></div>
          <div class="tagprice">1.28551</div>
        </div>
        <div class="ctabs">
          <span v-for="t in chartTabs" :key="t" class="ctab" :class="{ on: t === 'USDCADm,H1' }">{{ t }}</span>
          <span class="scrolls"><i>‹</i><i>›</i></span>
        </div>
      </section>
    </main>

    <footer class="term">
      <div class="termside"><b>×</b></div>
      <div class="termbody">
        <div class="thead">
          <span class="first">订单<i>/</i></span>
          <span v-for="(c, n) in termCols" :key="n">{{ c }}</span>
        </div>
        <div class="tstatus">
          <span class="dot"></span>
          <span class="bal">余额: 1 110.33 USD</span>
          <span class="bal">净值: 1 110.33</span>
          <span class="bal">可用预付款: 1 110.33</span>
          <span class="bal total">0.00</span>
        </div>
      </div>
    </footer>

    <div class="mark">
      <svg width="32" height="40" viewBox="0 0 32 40"><path d="M16 3a13 13 0 0 1 6 25c-4 2-8 5-11 8 1-3 2-6 1-7A13 13 0 0 1 16 3z" fill="none" stroke="#fff" stroke-width="3" /><path d="M12 24c3-4 2-10 6-11M9 17h14" stroke="#555" stroke-width="2" fill="none" /></svg>
      <span>@初夏的果哥</span>
    </div>
  </div>
</template>

<style>
html, body { margin: 0; background: #f0f0f0; }
</style>

<style scoped>
.app {
  position: relative; width: 2556px; height: 980px; overflow: hidden; display: flex; flex-direction: column;
  font-family: "Liberation Sans", "Noto Sans CJK SC", sans-serif; font-size: 12px; color: #222; background: #f0f0f0;
}
.defs { position: absolute; width: 0; height: 0; }
.titlebar {
  height: 21px; flex: none; display: flex; align-items: center;
  background: linear-gradient(180deg, #1d3a63, #274a7a 70%, #17345c); border-bottom: 1px solid #8fb4d8; box-sizing: border-box;
}
.logo { width: 11px; height: 14px; background: #111; color: #e8c030; font-size: 9px; font-weight: bold; line-height: 14px; overflow: hidden; }
.title { margin-left: 6px; font-size: 12px; letter-spacing: -.2px; color: #1a1a1a; white-space: nowrap; padding: 2px 4px 2px 0; background: radial-gradient(ellipse at center, rgba(225,238,250,.92) 60%, rgba(225,238,250,.1) 100%); text-shadow: 0 0 4px #fff, 0 0 4px #fff; }
.menubar { height: 22px; flex: none; display: flex; align-items: center; background: #f7f8f9; border-bottom: 1px solid #b8b8b8; box-sizing: border-box; position: relative; font-size: 13px; }
.mico { position: absolute; left: 1px; top: 3px; width: 16px; height: 16px; }
.menu { position: relative; left: 24px; margin-right: 18px; white-space: nowrap; }
.toolrow { flex: none; display: flex; justify-content: space-between; align-items: center; background: #efefef; border-bottom: 1px solid #bdbdbd; box-sizing: border-box; }
.tr1 { height: 27px; }
.tr2 { height: 27px; border-bottom: 2px solid #a8a8a8; }
.toolbar { display: flex; align-items: center; height: 100%; padding-left: 1px; border-right: 1px solid #c8c8c8; }
.tbtn { position: relative; width: 28px; height: 24px; display: flex; align-items: center; justify-content: center; box-sizing: border-box; flex: none; }
.tbtn.wide { justify-content: flex-start; padding-left: 6px; gap: 2px; font-size: 13px; color: #222; white-space: nowrap; }
.pressed { background: #fbfbfb; border: 1px solid #cfcfcf; }
.tico { width: 18px; height: 18px; flex: none; }
.tbtn small { position: absolute; right: 4px; bottom: 2px; font-size: 8px; color: #444; }
.letter { font-size: 14px; color: #666; }
.boxed b { font-weight: 400; border: 1px dotted #777; padding: 0 3px; }
.drop { width: 10px; font-size: 10px; text-align: center; color: #222; flex: none; }
.drop.narrow { width: 6px; }
.sep { display: flex; justify-content: center; height: 22px; flex: none; }
.sep i { width: 1px; background: #bcbcbc; }
.period { width: 28.5px; height: 24px; box-sizing: border-box; display: flex; align-items: center; justify-content: center; font-size: 10px; color: #555; flex: none; }
.corner { position: relative; width: 40px; height: 22px; margin-right: 6px; }
.bico { position: absolute; left: 4px; top: 4px; width: 16px; height: 16px; }
.badge { position: absolute; left: 18px; top: 1px; width: 14px; height: 14px; border-radius: 50%; background: #d8231f; color: #fff; font-size: 10px; line-height: 14px; text-align: center; }

.main { flex: none; height: 829px; display: flex; }
.nav { width: 263px; flex: none; display: flex; flex-direction: column; background: #fff; }
.navhead { height: 15px; flex: none; display: flex; justify-content: space-between; align-items: center; padding: 0 5px 0 2px; background: linear-gradient(180deg, #dde7f1, #cfdce9); border-bottom: 1px solid #a8a8a8; font-size: 12px; line-height: 14px; color: #666; overflow: visible; }
.navhead b { color: #111; font-size: 13px; }
.tree { position: relative; flex: 1; padding-top: 1px; background: #fff; }
.guides { position: absolute; left: 0; top: 1px; }
.node { position: relative; height: 20px; display: flex; align-items: center; font-size: 12.5px; color: #333; letter-spacing: .4px; white-space: nowrap; }
.nico { width: 17px; height: 17px; margin-right: 5px; flex: none; }
.l0 { padding-left: 5px; }
.l1 { padding-left: 25px; }
.l2 { padding-left: 47px; }
.l3 { padding-left: 68px; }
.navtabs { height: 27px; flex: none; display: flex; align-items: flex-start; padding-left: 3px; background: #f0f0f0; border-top: 1px solid #111; border-bottom: 1px solid #9a9a9a; box-sizing: border-box; font-size: 12px; }
.ntab { height: 20px; padding: 0 10px; display: flex; align-items: center; color: #999; border-right: 1px solid #999; margin-left: 0; }
.ntab.on { background: #fff; color: #222; border: 1px solid #111; border-top: none; margin-top: -1px; padding: 0 9px; height: 22px; }
.split { width: 3px; flex: none; background: #c8c8c8; border-right: 1px solid #888; box-sizing: border-box; }

.chartcol { flex: 1; display: flex; flex-direction: column; min-width: 0; }
.chart { position: relative; height: 808px; flex: none; background: #000; padding: 2px 0 0 2px; box-sizing: border-box; overflow: hidden; }
.panes { width: 2242px; display: flex; flex-direction: column; gap: 2px; }
.pane { border: 1px solid #fff; box-sizing: border-box; position: relative; }
.p-main { height: 540px; }
.p-ind { height: 96px; }
.p-sym { height: 88px; }
.p-sol { height: 57px; }
.plabel { display: block; padding: 2px 0 0 2px; font-size: 10px; color: #bbb; white-space: nowrap; }
.plabel.sym { height: 16px; padding-top: 3px; box-sizing: border-box; padding-left: 3px; }
.symgrid {
  display: grid; grid-template-columns: repeat(15, 65.85px); grid-template-rows: 19px 19px 24px; gap: 2px 0;
  margin-left: 21px; padding-top: 3px; position: relative; z-index: 3;
}
.sbtn { margin-right: 1.5px; background: #dedede; color: #222; font-size: 11px; display: flex; align-items: center; justify-content: center; border-top: 1px solid #f4f4f4; box-sizing: border-box; }
.sbtn.act { background: #0606e0; color: #e0204a; border: 1px solid #a0c0ff; font-weight: bold; }
.sbtn.big { font-size: 11.5px; }
.sbtn.actb { background: #0606f0; color: #e02040; border: 3px solid #dedede; }
.sbtn.small { height: 20px; background: #c6c6c6; border-bottom: 1px solid #666; }

.plot { position: absolute; left: 0; top: 0; pointer-events: none; z-index: 2; font-family: "Liberation Sans", sans-serif; }
.ax { font-size: 10px; fill: #e6e6e6; }
.ft { font-size: 11.500px; }
.rr { font-size: 16px; fill: #e2d43c; }

.symname { position: absolute; left: 8px; top: 3px; z-index: 3; color: #ddd; font-size: 10.500px; display: flex; align-items: center; gap: 5px; }
.symname i { width: 0; height: 0; border: 3.500px solid transparent; border-bottom: 5px solid #fff; border-top: none; }
.hilo { position: absolute; left: 252px; top: 4px; z-index: 3; display: flex; font-size: 13.500px; color: #6f96a8; white-space: nowrap; }
.hilo em { font-style: normal; color: #c01018; margin: 0 6px 0 4px; }

.trade { position: absolute; left: 6px; top: 23px; width: 220px; z-index: 3; }
.tradetop { display: flex; height: 24px; justify-content: space-between; }
.tside { width: 51px; height: 22px; background: linear-gradient(180deg, #4c4cf4, #3030dc); color: #d8d8f8; font-size: 13px; display: flex; align-items: center; justify-content: center; border-bottom: 1px solid #9ca4e8; }
.lots { width: 111px; height: 21px; background: #fff; display: flex; align-items: center; justify-content: space-between; box-shadow: 0 0 0 1px #888; margin: 0 3px; }
.lots b { flex: 1; text-align: right; font-weight: 400; font-size: 12.500px; color: #333; padding-right: 4px; }
.spin { width: 21px; height: 21px; font-style: normal; font-size: 10px; line-height: 20px; color: #777; background: #c4c4c4; text-align: center; }
.tradebot { display: flex; gap: 3px; }
.quote { position: relative; width: 108px; height: 38px; background: linear-gradient(180deg, #1616c0, #2020e4 55%, #0f0fa8); color: #fff; display: flex; align-items: flex-end; justify-content: center; box-sizing: border-box; overflow: hidden; }
.quote small { position: absolute; left: 20px; bottom: 4px; font-size: 12px; font-weight: bold; }
.quote strong { position: absolute; left: 48px; bottom: -1px; font-weight: 400; font-size: 35px; line-height: 38px; transform: scaleX(.86); transform-origin: left center; }
.quote sup { position: absolute; left: 90px; top: 3px; font-size: 12px; font-weight: bold; line-height: 12px; }

.sidebtns { position: absolute; left: 597px; top: 29px; z-index: 3; display: flex; flex-direction: column; gap: 12px; width: 15px; }
.sb { height: 13px; border: 1px solid #ddd; border-radius: 1px; background: #222; color: #eee; font-size: 10px; line-height: 12px; text-align: center; box-sizing: content-box; }
.sb.dark { border-color: #333; background: #2a2c30; color: #aaa; margin-top: -2px; }

.mtd { position: absolute; left: 614px; top: 27px; width: 930px; height: 202px; z-index: 3; background: #1c1c1c; border: 1px solid #9a9ca0; box-sizing: border-box; display: flex; flex-direction: column; overflow: hidden; }
.mtdtitle { height: 22px; padding: 3px 0 0 4px; box-sizing: border-box; flex: none; color: #e8e818; font-size: 11px; white-space: nowrap; }
.mtdtabs { height: 19px; flex: none; display: flex; align-items: center; padding-left: 9px; font-size: 13px; color: #555; }
.mt { width: 22px; text-align: center; flex: none; }
.mt.on { background: #2a2e36; color: #8a8e94; }
.mt.acct { width: 30px; margin-left: 4px; white-space: nowrap; }
.mt.path { width: 30px; margin-left: 58px; white-space: nowrap; }
.mtdbody { position: relative; flex: none; height: 144px; background: #262b33; }
.eq { display: block; }
.eqdate { position: absolute; right: 10px; top: 101px; color: #6a6e74; font-size: 10px; }
.stat { display: grid; grid-template-columns: 79px 60px 60px 60px 81px 69px 71px 90px 90px 81px 89px 1fr; padding-left: 5px; white-space: nowrap; }
.stat.head { position: absolute; left: 0; right: 0; top: 116px; font-size: 12px; color: #9a9ea4; }
.stat.vals { font-size: 11px; }
.mtdbody .vals { position: absolute; left: 0; right: 0; top: 132px; }
.stat .g { color: #a0a4a8; }
.stat .r { color: #b01820; }
.stat .n { color: #20c870; }
.tot { height: 15px; flex: none; background: #1c1c1c; line-height: 14px; }
.tot .g { font-size: 11px; }

.stats { position: absolute; left: 2141px; top: 15px; width: 84px; z-index: 3; display: flex; flex-direction: column; font-size: 12px; }
.srow { height: 15px; line-height: 15px; display: flex; justify-content: space-between; white-space: nowrap; }
.srow b { font-weight: 400; }
.top span { color: #a8d4e8; }
.top b { color: #eba324; font-weight: bold; font-size: 15px; }
.open { height: 16px; border-top: 1px dashed #ddd; border-bottom: 1px dashed #ddd; margin: 1px 0; color: #2aa52a; }
.open b { color: #26d626; font-weight: bold; font-size: 15px; }
.day span { color: #eee; font-size: 13px; }
.day b { color: #e4e434; font-size: 14px; }
.avg { height: 15px; border-top: 1px dashed #6fb8c8; border-bottom: 1px dashed #6fb8c8; margin-top: 1px; color: #e89a30; }
.avg b { color: #24e024; font-weight: bold; font-size: 15px; }
.spread span { color: #a8d4e8; }
.spread b { color: #eec830; font-weight: bold; font-size: 16px; }
.spread { height: 17px; margin-top: 1px; }
.bigp { color: #e8a020; font-size: 20px; line-height: 20px; margin-top: 0; }

.tagred { position: absolute; left: 2244px; top: 62px; width: 42px; height: 8px; background: #e02020; z-index: 3; }
.tagprice { position: absolute; left: 2244px; top: 66px; width: 42px; height: 14px; line-height: 14px; background: #fff; color: #111; font-size: 10.500px; text-align: center; z-index: 3; }

.ctabs { height: 21px; flex: none; display: flex; align-items: stretch; padding-left: 2px; background: #f0f0f0; border-bottom: 1px solid #a8a8a8; border-top: 2px solid #000; box-sizing: content-box; font-size: 12px; position: relative; }
.ctab { padding: 0 13px 0 12px; display: flex; align-items: center; color: #999; position: relative; }
.ctab::after { content: ""; position: absolute; right: 0; top: 3px; bottom: 3px; width: 1px; background: #bbb; }
.ctab.on { background: #fff; color: #222; border: 1px solid #111; border-top: none; margin-top: -1px; padding: 0 12px 0 11px; }
.ctab.on::after { display: none; }
.scrolls { position: absolute; right: 3px; top: 1px; display: flex; gap: 12px; color: #aaa; font-size: 14px; }
.scrolls i { font-style: normal; }

.term { position: relative; margin-top: 4px; height: 48px; flex: none; display: flex; }
.termside { width: 11px; flex: none; background: linear-gradient(180deg, #f4f4f4 10px, #cfe0f0 10px); }
.termside b { font-size: 12px; line-height: 11px; display: block; padding-left: 1px; }
.termbody { flex: 1; display: flex; flex-direction: column; min-width: 0; }
.thead { height: 24px; flex: none; display: grid; grid-template-columns: 252px 349px 173px 135px 174px 193px 192px 196px 195px 189px 192px 1fr; background: #fafafa; border-top: 1px solid #c8c8c8; border-bottom: 1px solid #c8c8c8; box-sizing: border-box; font-size: 12.500px; color: #444; }
.thead span { display: flex; align-items: center; justify-content: flex-end; padding-right: 4px; border-right: 1px solid #e6e6e6; }
.thead .first { justify-content: flex-start; padding-left: 7px; }
.first i { margin-left: 12px; color: #aaa; font-size: 10px; }
.tstatus { height: 24px; flex: none; display: flex; align-items: center; gap: 9px; background: #c2c2c2; font-weight: bold; font-size: 12px; letter-spacing: .1px; color: #222; padding-right: 7px; padding-left: 7px; }
.dot { width: 8px; height: 8px; margin-right: 2px; border-radius: 50%; background: #e0e0e0; border: 1px solid #999; }
.total { margin-left: auto; }

.mark { position: absolute; left: 2276px; top: 903px; z-index: 5; display: flex; align-items: center; gap: 12px; color: #fff; font-size: 34px; line-height: 38px; white-space: nowrap; text-shadow: 1px 1px 1px #777, -1px 1px 1px #999, 1px -1px 1px #999; }
</style>
